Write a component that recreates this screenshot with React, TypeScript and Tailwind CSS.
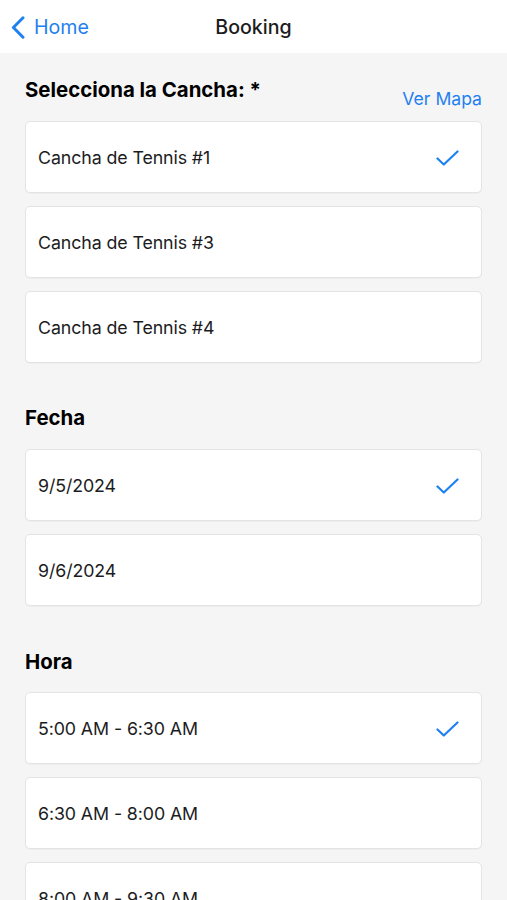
type Option = { label: string; selected?: boolean };

const courts: Option[] = [
  { label: "Cancha de Tennis #1", selected: true },
  { label: "Cancha de Tennis #3" },
  { label: "Cancha de Tennis #4" },
];

const dates: Option[] = [{ label: "9/5/2024", selected: true }, { label: "9/6/2024" }];

const hours: Option[] = [
  { label: "5:00 AM - 6:30 AM", selected: true },
  { label: "6:30 AM - 8:00 AM" },
  { label: "8:00 AM - 9:30 AM" },
];

function CheckMark() {
  return (
    <svg width="23" height="16" viewBox="0 0 23 16" fill="none" className="text-[#1f80f0]">
      <path d="M1.5 8.5 L7.8 14.5 L21.5 1.5" stroke="currentColor" strokeWidth="2.2" strokeLinecap="round" strokeLinejoin="round" />
    </svg>
  );
}

function OptionList({ items }: { items: Option[] }) {
  return (
    <div className="flex flex-col gap-[13px]">
      {items.map((item) => (
        <div
          key={item.label}
          className="flex h-[72px] shrink-0 items-center justify-between rounded-[5px] border border-[#e4e4e4] bg-white pt-[2px] pl-[12px] pr-[22px] shadow-[0_1px_1px_rgba(0,0,0,0.03)]"
        >
          <span className="text-[17.8px] tracking-[-0.1px] text-[#1c1c1e]">{item.label}</span>
          {item.selected && <CheckMark />}
        </div>
      ))}
    </div>
  );
}

export default function App() {
  return (
    <div
      className="flex h-[900px] flex-col overflow-hidden bg-[#f5f5f5]"
      style={{ fontFamily: "Inter, 'Noto Sans', sans-serif" }}
    >
      <header className="relative flex h-[53px] shrink-0 items-center justify-center bg-white pt-[3px]">
        <button type="button" className="absolute left-[11px] top-[16px] flex items-center gap-[9px] text-[#1f80f0]">
          <svg width="14" height="23" viewBox="0 0 14 23" fill="none">
            <path d="M12 1.8 L2.4 11.5 L12 21.2" stroke="currentColor" strokeWidth="3" strokeLinecap="round" strokeLinejoin="round" />
          </svg>
          <span className="text-[19.6px] leading-[23px]">Home</span>
        </button>
        <h1 className="text-[19.6px] font-medium text-[#1c1c1e]">Booking</h1>
      </header>

      <main className="flex flex-col px-[25px] pt-[25px]">
        <div className="mb-[11px] flex items-start justify-between">
          <h2 className="text-[20.4px] leading-[24px] font-bold text-black">Selecciona la Cancha: *</h2>
          <span className="mt-[10px] text-[17.6px] leading-[22px] text-[#1f80f0]">Ver Mapa</span>
        </div>
        <OptionList items={courts} />

        <h2 className="mt-[43px] mb-[19px] text-[20.4px] leading-[24px] font-bold text-black">Fecha</h2>
        <OptionList items={dates} />

        <h2 className="mt-[44px] mb-[18px] text-[20.4px] leading-[24px] font-bold text-black">Hora</h2>
        <OptionList items={hours} />
      </main>
    </div>
  );
}
